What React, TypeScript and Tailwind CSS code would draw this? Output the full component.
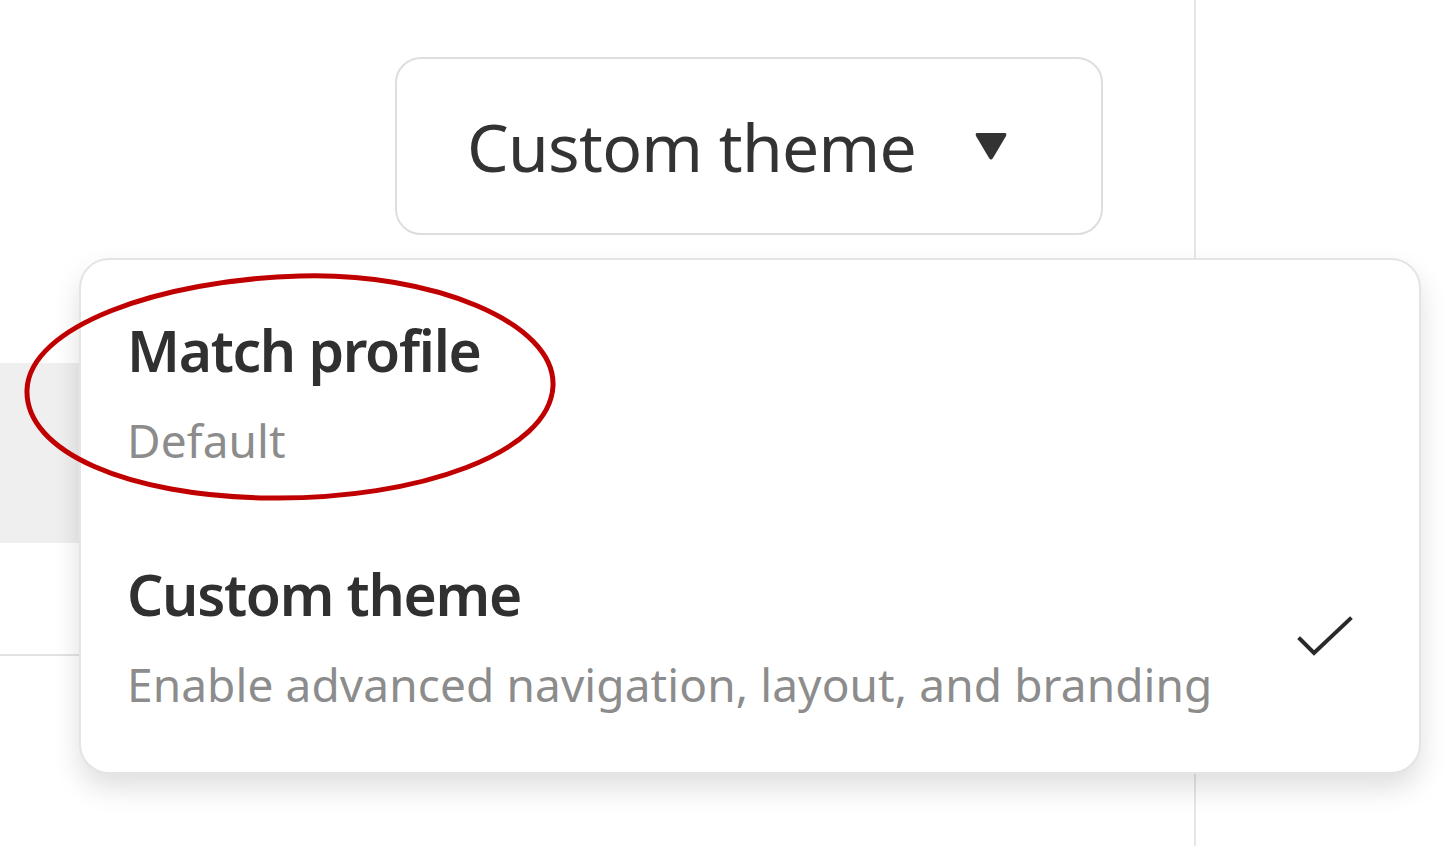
const font = { fontFamily: '"Noto Sans", "Open Sans", sans-serif' };

function MenuItem({ title, subtitle, selected, className }: { title: string; subtitle: string; selected?: boolean; className?: string }) {
  return (
    <div className={`flex items-center justify-between pl-[46px] pr-[66px] ${className ?? ''}`}>
      <div className="flex flex-col gap-[38px]">
        <span className="text-[57px] leading-none font-semibold tracking-[-1.3px] text-[#303030]">{title}</span>
        <span className="text-[46px] leading-none tracking-[0.1px] text-[#8c8c8c]">{subtitle}</span>
      </div>
      {selected && (
        <svg width="56" height="44" viewBox="0 0 56 44" className="text-[#2a2a2a]">
          <path d="M3 24 L17 38 L53 4" fill="none" stroke="currentColor" strokeWidth="4" strokeLinecap="square" />
        </svg>
      )}
    </div>
  );
}

export default function App() {
  return (
    <div className="relative h-[846px] w-[1456px] overflow-hidden bg-white" style={font}>
      <div className="flex h-full">
        {/* Main column behind the popover */}
        <div className="flex h-full w-[1196px] flex-col border-r-2 border-[#e6e6e6]">
          <div className="flex pt-[57px] pl-[395px]">
            <button className="flex h-[178px] w-[708px] items-center gap-[58px] rounded-[26px] border-2 border-[#dedede] pl-[70px] text-[#333]">
              <span className="text-[66px] leading-none tracking-[-0.7px]">Custom theme</span>
              <svg width="34" height="30" viewBox="0 0 34 30">
                <path d="M3 2 H31 Q33 2 32 5 L19 27 Q17 30 15 27 L2 5 Q1 2 3 2 Z" fill="#333" />
              </svg>
            </button>
          </div>
          <div className="mt-[128px] h-[180px] bg-[#efefef]" />
          <div className="mt-[111px] h-[2px] bg-[#e2e2e2]" />
        </div>
        <div className="flex-1" />
      </div>

      {/* Dropdown popover */}
      <div className="absolute left-[79px] top-[258px] w-[1342px] h-[516px] rounded-[30px] border-2 border-[#e4e4e4] bg-white shadow-[0_14px_28px_rgba(0,0,0,0.13)]">
        <MenuItem title="Match profile" subtitle="Default" className="pt-[62px]" />
        <MenuItem title="Custom theme" subtitle="Enable advanced navigation, layout, and branding" selected className="pt-[103px]" />
      </div>

      {/* Red annotation */}
      <svg className="pointer-events-none absolute left-0 top-0" width="600" height="520" viewBox="0 0 600 520">
        <path
          d="M300 276 C430 272, 556 322, 553 386 C550 452, 420 500, 268 498 C128 496, 25 452, 27 390 C29 326, 160 280, 300 276 Z"
          fill="none"
          stroke="#c00000"
          strokeWidth="5"
        />
      </svg>
    </div>
  );
}
